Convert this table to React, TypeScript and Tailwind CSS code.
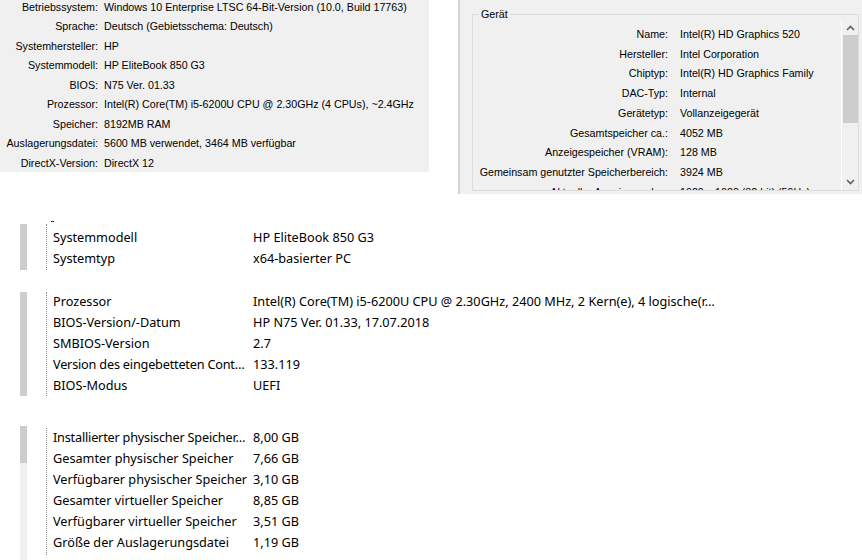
import React, { JSX } from "react";

const sysRows: [string, string][] = [
  ["Betriebssystem:", "Windows 10 Enterprise LTSC 64-Bit-Version (10.0, Build 17763)"],
  ["Sprache:", "Deutsch (Gebietsschema: Deutsch)"],
  ["Systemhersteller:", "HP"],
  ["Systemmodell:", "HP EliteBook 850 G3"],
  ["BIOS:", "N75 Ver. 01.33"],
  ["Prozessor:", "Intel(R) Core(TM) i5-6200U CPU @ 2.30GHz (4 CPUs), ~2.4GHz"],
  ["Speicher:", "8192MB RAM"],
  ["Auslagerungsdatei:", "5600 MB verwendet, 3464 MB verfügbar"],
  ["DirectX-Version:", "DirectX 12"],
];

const gpuRows: [string, string][] = [
  ["Name:", "Intel(R) HD Graphics 520"],
  ["Hersteller:", "Intel Corporation"],
  ["Chiptyp:", "Intel(R) HD Graphics Family"],
  ["DAC-Typ:", "Internal"],
  ["Gerätetyp:", "Vollanzeigegerät"],
  ["Gesamtspeicher ca.:", "4052 MB"],
  ["Anzeigespeicher (VRAM):", "128 MB"],
  ["Gemeinsam genutzter Speicherbereich:", "3924 MB"],
  ["Aktueller Anzeigemodus:", "1920 x 1080 (32 bit) (59Hz)"],
];

const sectionA: [string, string][] = [
  ["Systemmodell", "HP EliteBook 850 G3"],
  ["Systemtyp", "x64-basierter PC"],
];

const sectionB: [string, string][] = [
  ["Prozessor", "Intel(R) Core(TM) i5-6200U CPU @ 2.30GHz, 2400 MHz, 2 Kern(e), 4 logische(r…"],
  ["BIOS-Version/-Datum", "HP N75 Ver. 01.33, 17.07.2018"],
  ["SMBIOS-Version", "2.7"],
  ["Version des eingebetteten Cont…", "133.119"],
  ["BIOS-Modus", "UEFI"],
];

const sectionC: [string, string][] = [
  ["Installierter physischer Speicher…", "8,00 GB"],
  ["Gesamter physischer Speicher", "7,66 GB"],
  ["Verfügbarer physischer Speicher", "3,10 GB"],
  ["Gesamter virtueller Speicher", "8,85 GB"],
  ["Verfügbarer virtueller Speicher", "3,51 GB"],
  ["Größe der Auslagerungsdatei", "1,19 GB"],
];

function InfoRows({ rows }: { rows: [string, string][] }): JSX.Element {
  return (
    <div className="grid grid-cols-[200px_1fr]">
      {rows.map(([k, v]) => (
        <React.Fragment key={k}>
          <div className={k.endsWith("…") ? "h-[21px] leading-[21px] whitespace-nowrap tracking-[-0.2px]" : "h-[21px] leading-[21px] whitespace-nowrap"}>
            {k}
          </div>
          <div className="h-[21px] leading-[21px] whitespace-nowrap">{v}</div>
        </React.Fragment>
      ))}
    </div>
  );
}

export default function App(): JSX.Element {
  return (
    <div className="w-[862px] h-[560px] overflow-hidden bg-white text-black">
      {/* top: dxdiag screenshots */}
      <div className="flex h-[195px] font-['Liberation_Sans',sans-serif] text-[10.7px] text-[#000]">
        <div className="w-[429px] h-[172px] bg-[#f0f0f0] overflow-hidden">
          <div className="-mt-[3px]">
            {sysRows.map(([k, v]) => (
              <div key={k} className="flex h-[19.5px] items-center whitespace-nowrap">
                <div className="w-[98px] text-right">{k}</div>
                <div className="pl-[6px]">{v}</div>
              </div>
            ))}
          </div>
        </div>
        <div className="ml-[29px] w-[2px] h-[194px] bg-[#d4d4d4]" />
        <div className="flex-1 h-[194px] bg-[#f0f0f0] pl-[12px] pt-[14px]">
          <div className="relative w-[387px] h-[177px] border border-[#dcdcdc]">
            <div className="absolute -top-[8px] left-[6px] bg-[#f0f0f0] px-[2px] leading-[14px]">Gerät</div>
            <div className="flex h-full">
              <div className="flex-1 overflow-hidden pt-[9px]">
                {gpuRows.map(([k, v]) => (
                  <div key={k} className="flex h-[19.75px] items-center whitespace-nowrap">
                    <div className="w-[195px] text-right">{k}</div>
                    <div className="pl-[12px]">{v}</div>
                  </div>
                ))}
              </div>
              <div className="mt-[5px] w-[17px] border-l border-white flex flex-col items-center bg-[#f0f0f0]">
                <svg width="9" height="6" viewBox="0 0 9 6" className="mt-[5px]">
                  <path d="M1 5 L4.5 1.5 L8 5" fill="none" stroke="#606060" strokeWidth="1.6" />
                </svg>
                <div className="mt-[4px] w-[15px] h-[88px] bg-[#cdcdcd]" />
                <div className="flex-1" />
                <svg width="9" height="6" viewBox="0 0 9 6" className="mb-[5px]">
                  <path d="M1 1 L4.5 4.5 L8 1" fill="none" stroke="#606060" strokeWidth="1.6" />
                </svg>
              </div>
            </div>
          </div>
        </div>
      </div>

      {/* bottom: msinfo32 */}
      <div className="font-['Noto_Sans',sans-serif] text-[12.7px] text-[#000]">
        <div className="relative mt-[29px] flex h-[46px]">
          <div className="ml-[20px] w-[7px] bg-[#cdcdcd]" />
          <div className="ml-[19px] border-l border-dotted border-[#8a8a8a]" />
          <div className="pl-[6px] pt-[3px]">
            <InfoRows rows={sectionA} />
          </div>
          <div className="absolute left-[51px] -top-[3px] w-[3px] h-[1px] bg-[#333]" />
        </div>

        <div className="mt-[22px] flex h-[104px]">
          <div className="ml-[20px] w-[7px] bg-[#cdcdcd]" />
          <div className="ml-[19px] border-l border-dotted border-[#8a8a8a]" />
          <div className="pl-[6px] -mt-[1.5px]">
            <InfoRows rows={sectionB} />
          </div>
        </div>

        <div className="mt-[30px] flex h-[140px]">
          <div className="ml-[20px] w-[7px] flex flex-col">
            <div className="h-[37px] bg-[#cdcdcd]" />
            <div className="flex-1 bg-[#f0f0f0]" />
          </div>
          <div className="ml-[19px] mt-[2px] h-[127px] border-l border-dotted border-[#8a8a8a]" />
          <div className="pl-[6px] pt-[0.5px]">
            <InfoRows rows={sectionC} />
          </div>
        </div>
      </div>
    </div>
  );
}
